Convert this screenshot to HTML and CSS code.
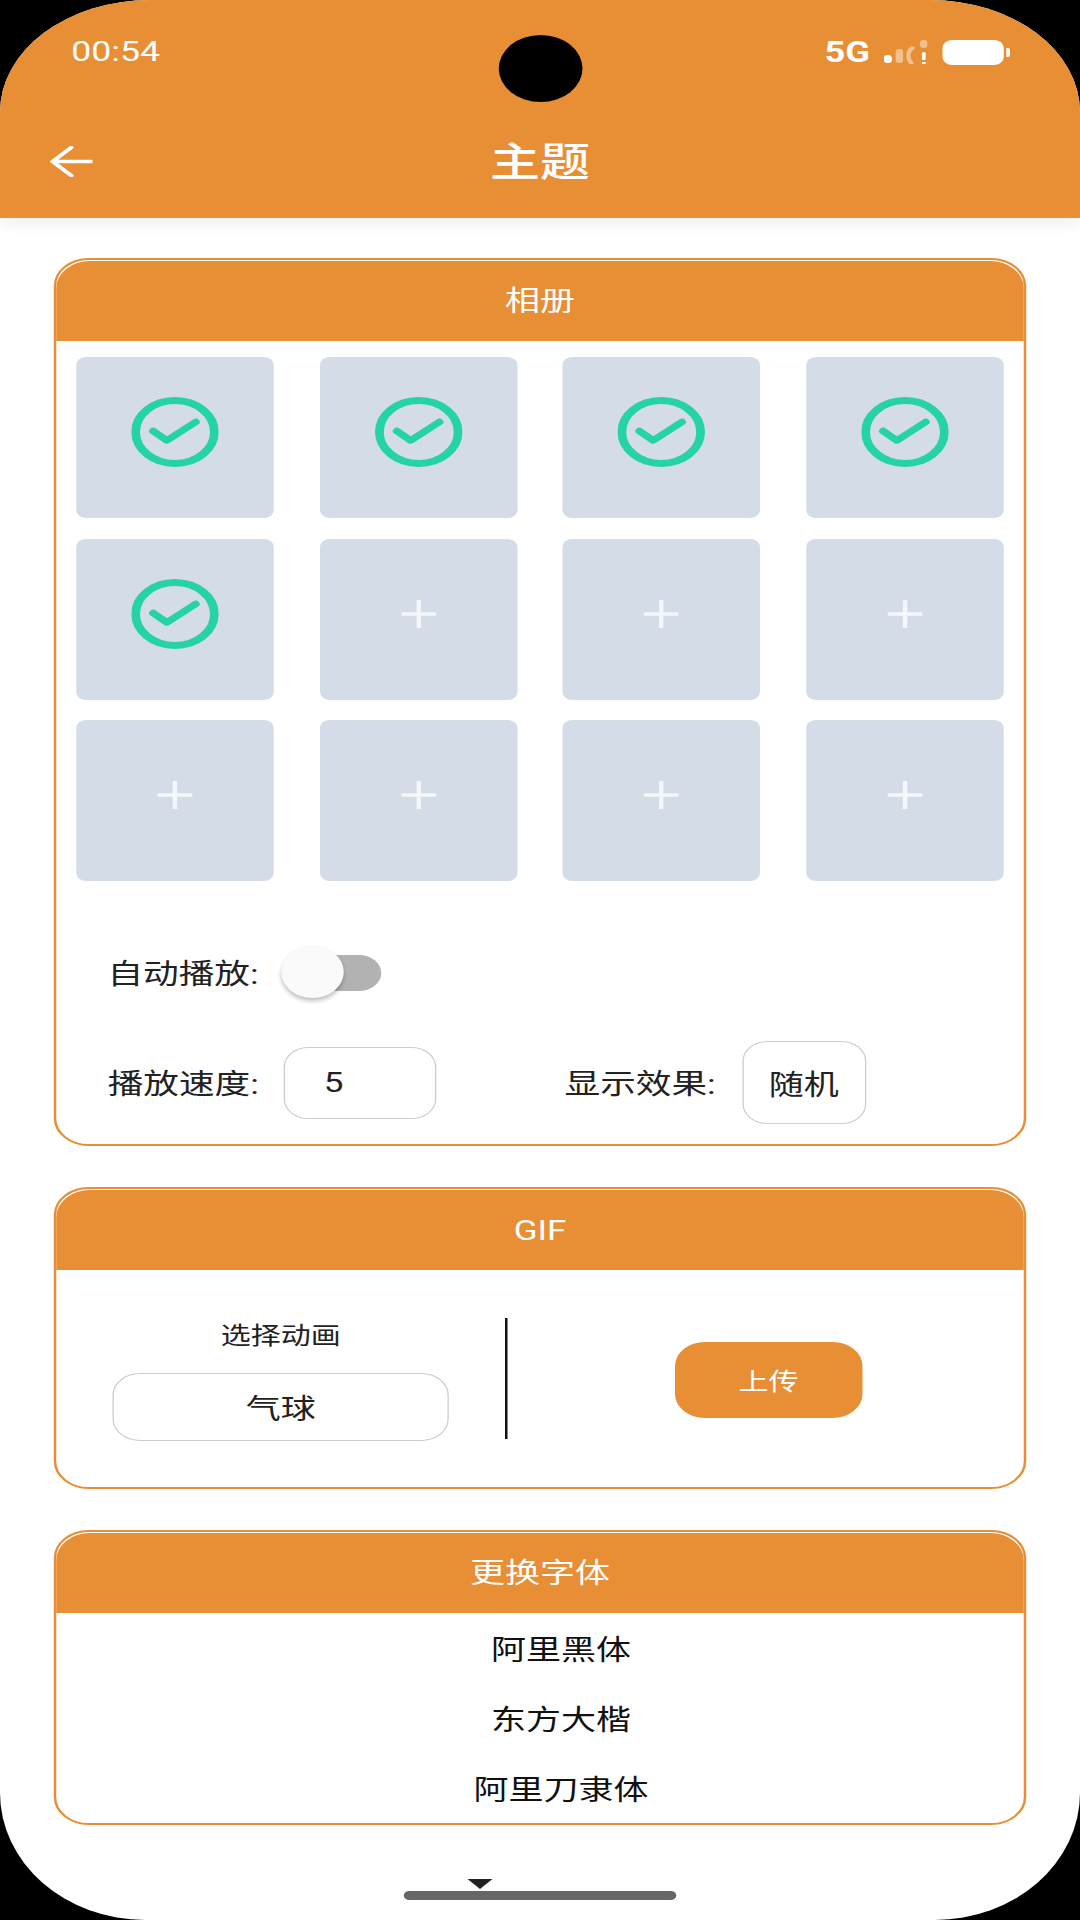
FILE: index.html
```html
<!DOCTYPE html>
<html lang="zh-CN">
<head>
    <meta charset="UTF-8">
    <meta name="viewport" content="width=device-width, initial-scale=1.0">
    <title>主题</title>
    <link rel="stylesheet" href="styles.css">
</head>

<body>
    <svg class="defs" width="0" height="0">
        <symbol id="icon-check" viewBox="0 0 70 70">
            <circle cx="35" cy="35" r="31.5" fill="none" stroke="#26d3a6" stroke-width="7"/>
            <path d="M17.5 34 L28.5 43.5 L51.5 25" fill="none" stroke="#26d3a6" stroke-width="6.5" stroke-linecap="round" stroke-linejoin="round"/>
        </symbol>
        <symbol id="icon-plus" viewBox="0 0 28 28">
            <path d="M0 14 H28 M14 0 V28" fill="none" stroke="#f5f7fa" stroke-width="3.5"/>
        </symbol>
    </svg>

    <div class="screen">
        <header class="topbar">
            <div class="status-bar">
                <span class="time">00:54</span>
                <div class="status-icons">
                    <span class="network">5G</span>
                    <svg class="signal" viewBox="0 0 35 24" preserveAspectRatio="none">
                        <rect x="0" y="15" width="6.5" height="8" rx="3" fill="#fff"/>
                        <rect x="9.5" y="9" width="6" height="14" rx="3" fill="#fff" opacity="0.45"/>
                        <path d="M22 23 C18.5 18 19 11 23 8" fill="none" stroke="#fff" stroke-width="3.5" stroke-linecap="round" opacity="0.45"/>
                        <rect x="29" y="0" width="6" height="8" rx="3" fill="#fff" opacity="0.45"/>
                        <rect x="30.5" y="12" width="3" height="8" rx="1.5" fill="#fff"/>
                        <rect x="30.5" y="22" width="3" height="2" fill="#fff"/>
                    </svg>
                    <div class="battery"></div>
                    <div class="battery-cap"></div>
                </div>
            </div>
            <div class="camera"></div>
            <div class="title-row">
                <svg class="back" viewBox="0 0 34 31">
                    <path d="M33 15.5 H2 M17 1.5 L2 15.5 L17 29.5" fill="none" stroke="#fff" stroke-width="3.6" stroke-linecap="round" stroke-linejoin="round"/>
                </svg>
                <h1>主题</h1>
            </div>
        </header>

        <main class="content">
            <section class="card">
                <h2 class="card-title">相册</h2>
                <div class="photo-grid">
                    <div class="photo"><svg class="check"><use href="#icon-check"/></svg></div>
                    <div class="photo"><svg class="check"><use href="#icon-check"/></svg></div>
                    <div class="photo"><svg class="check"><use href="#icon-check"/></svg></div>
                    <div class="photo"><svg class="check"><use href="#icon-check"/></svg></div>
                    <div class="photo"><svg class="check"><use href="#icon-check"/></svg></div>
                    <div class="photo"><svg class="plus"><use href="#icon-plus"/></svg></div>
                    <div class="photo"><svg class="plus"><use href="#icon-plus"/></svg></div>
                    <div class="photo"><svg class="plus"><use href="#icon-plus"/></svg></div>
                    <div class="photo"><svg class="plus"><use href="#icon-plus"/></svg></div>
                    <div class="photo"><svg class="plus"><use href="#icon-plus"/></svg></div>
                    <div class="photo"><svg class="plus"><use href="#icon-plus"/></svg></div>
                    <div class="photo"><svg class="plus"><use href="#icon-plus"/></svg></div>
                </div>
                <div class="autoplay-row">
                    <span class="label">自动播放:</span>
                    <div class="switch">
                        <div class="switch-track"></div>
                        <div class="switch-thumb"></div>
                    </div>
                </div>
                <div class="settings-row">
                    <span class="label">播放速度:</span>
                    <div class="box box-speed">5</div>
                    <span class="label label-effect">显示效果:</span>
                    <div class="box box-effect">随机</div>
                </div>
            </section>

            <section class="card">
                <h2 class="card-title">GIF</h2>
                <div class="gif-body">
                    <div class="gif-pick">
                        <div class="gif-label">选择动画</div>
                        <div class="box box-gif">气球</div>
                    </div>
                    <div class="divider"></div>
                    <div class="gif-upload">
                        <button class="upload">上传</button>
                    </div>
                </div>
            </section>

            <section class="card">
                <h2 class="card-title">更换字体</h2>
                <ul class="font-list">
                    <li>阿里黑体</li>
                    <li>东方大楷</li>
                    <li>阿里刀隶体</li>
                </ul>
            </section>
        </main>

        <div class="home-bar">
            <div class="home-arrow"></div>
        </div>
    </div>
</body>
</html>
```

FILE: styles.css
```css
* {
    box-sizing: border-box;
}
html, body {
    margin: 0;
    height: 1920px;
    overflow: hidden;
    background: #000;
}
body {
    font-family: Roboto, "Noto Sans CJK SC", sans-serif;
    color: #222;
}
.defs {
    position: absolute;
}

/* the source capture is stretched sideways, so the whole page is laid out at 864 wide */
.screen {
    position: relative;
    display: flex;
    flex-direction: column;
    width: 864px;
    height: 1920px;
    background: #fff;
    border-radius: 120px 120px 116px 116px / 112px 112px 127px 127px;
    overflow: hidden;
    transform: scaleX(1.25);
    transform-origin: 0 0;
}

.topbar {
    height: 218px;
    background: #e88e35;
    box-shadow: 0 4px 14px rgba(0, 0, 0, 0.08);
    color: #fff;
}
.status-bar {
    display: flex;
    justify-content: space-between;
    height: 104px;
    padding: 32px 56px 0 57px;
}
.time {
    font-size: 28.5px;
    line-height: 40px;
}
.status-icons {
    display: flex;
    align-items: center;
    height: 40px;
}
.network {
    font-size: 29px;
    font-weight: 700;
    margin-right: 11px;
}
.signal {
    width: 35px;
    height: 24px;
    margin-right: 12px;
}
.battery {
    width: 49px;
    height: 25px;
    background: #fff;
    border-radius: 8px;
}
.battery-cap {
    width: 3px;
    height: 9px;
    margin-left: 2px;
    background: #fff;
    border-radius: 0 2px 2px 0;
}
.camera {
    position: absolute;
    top: 35px;
    left: 398.5px;
    width: 67px;
    height: 67px;
    background: #000;
    border-radius: 50%;
}
.title-row {
    display: grid;
    grid-template-columns: 1fr auto 1fr;
    align-items: center;
    height: 114px;
    padding-top: 4px;
}
.back {
    width: 34px;
    height: 31px;
    margin: -4px 0 0 40px;
}
.title-row h1 {
    margin: 0;
    font-size: 40px;
    font-weight: 500;
    line-height: 50px;
}

.content {
    padding: 40px 43.2px 0;
}
.card {
    margin-bottom: 41px;
    border: 2px solid #e88e35;
    border-radius: 28px;
    background: #fff;
}
.card-title {
    margin: 1px 0 0;
    height: 80px;
    padding-top: 1px;
    background: #e88e35;
    border-radius: 27px 27px 0 0;
    color: #fff;
    font-size: 28px;
    font-weight: 400;
    line-height: 80px;
    text-align: center;
}

.photo-grid {
    display: grid;
    grid-template-columns: repeat(4, 1fr);
    gap: 20.5px 36.8px;
    padding: 16px 16px 0;
}
.photo {
    display: flex;
    align-items: center;
    justify-content: center;
    height: 161px;
    padding-bottom: 11px;
    background: #d3dce7;
    border-radius: 8px;
}
.check {
    width: 70px;
    height: 70px;
}
.plus {
    width: 28px;
    height: 28px;
}

.label {
    padding-top: 5px;
    font-size: 28.5px;
    line-height: 40px;
}
.autoplay-row {
    display: flex;
    align-items: center;
    height: 54px;
    margin-top: 64px;
    padding-left: 40.8px;
}
.switch {
    position: relative;
    width: 82px;
    height: 54px;
    margin-left: 17px;
}
.switch-track {
    position: absolute;
    top: 10px;
    left: 9px;
    width: 72px;
    height: 36px;
    background: #b2b2b2;
    border-radius: 18px;
}
.switch-thumb {
    position: absolute;
    top: 1px;
    left: 1px;
    width: 50.4px;
    height: 52px;
    background: #fafafa;
    border-radius: 50%;
    box-shadow: 0 3px 4px rgba(0, 0, 0, 0.25);
}
.settings-row {
    display: flex;
    align-items: center;
    height: 83px;
    margin-top: 42px;
    margin-bottom: 20px;
    padding-left: 41px;
}
.box {
    display: flex;
    align-items: center;
    justify-content: center;
    border: 1px solid #ccc;
    background: #fff;
    font-size: 28px;
}
.box-speed {
    justify-content: flex-start;
    width: 121.6px;
    height: 72px;
    margin-left: 20px;
    padding-left: 31px;
    border-radius: 20px;
}
.label-effect {
    margin-left: 103px;
}
.box-effect {
    width: 99px;
    height: 83px;
    margin-left: 21px;
    border-radius: 20px;
}

.gif-body {
    display: flex;
    padding: 48px 0 46px 45px;
}
.gif-pick {
    display: flex;
    flex-direction: column;
    width: 268.8px;
}
.gif-label {
    height: 36px;
    margin-bottom: 19px;
    font-size: 24px;
    line-height: 36px;
    text-align: center;
}
.box-gif {
    height: 68px;
    border-radius: 22px;
}
.divider {
    width: 2px;
    height: 121px;
    margin-left: 45px;
    background: #111;
}
.gif-upload {
    display: flex;
    flex: 1;
    align-items: center;
    justify-content: center;
    padding-left: 5px;
}
.upload {
    width: 149.6px;
    height: 76px;
    border: none;
    border-radius: 24px;
    background: #e88e35;
    color: #fff;
    font-family: inherit;
    font-size: 24px;
}

.font-list {
    display: flex;
    flex-direction: column;
    gap: 5px;
    margin: 0;
    padding: 4.5px 0 0 33.6px;
    list-style: none;
    color: #111;
    font-size: 28px;
    line-height: 65px;
    text-align: center;
}

.home-bar {
    position: relative;
    align-self: center;
    width: 218px;
    height: 9px;
    margin-top: auto;
    margin-bottom: 20px;
    background: #666;
    border-radius: 4.5px;
}
.home-arrow {
    position: absolute;
    top: -12px;
    left: 51px;
    border-left: 10px solid transparent;
    border-right: 10px solid transparent;
    border-top: 10px solid #222;
}
```
